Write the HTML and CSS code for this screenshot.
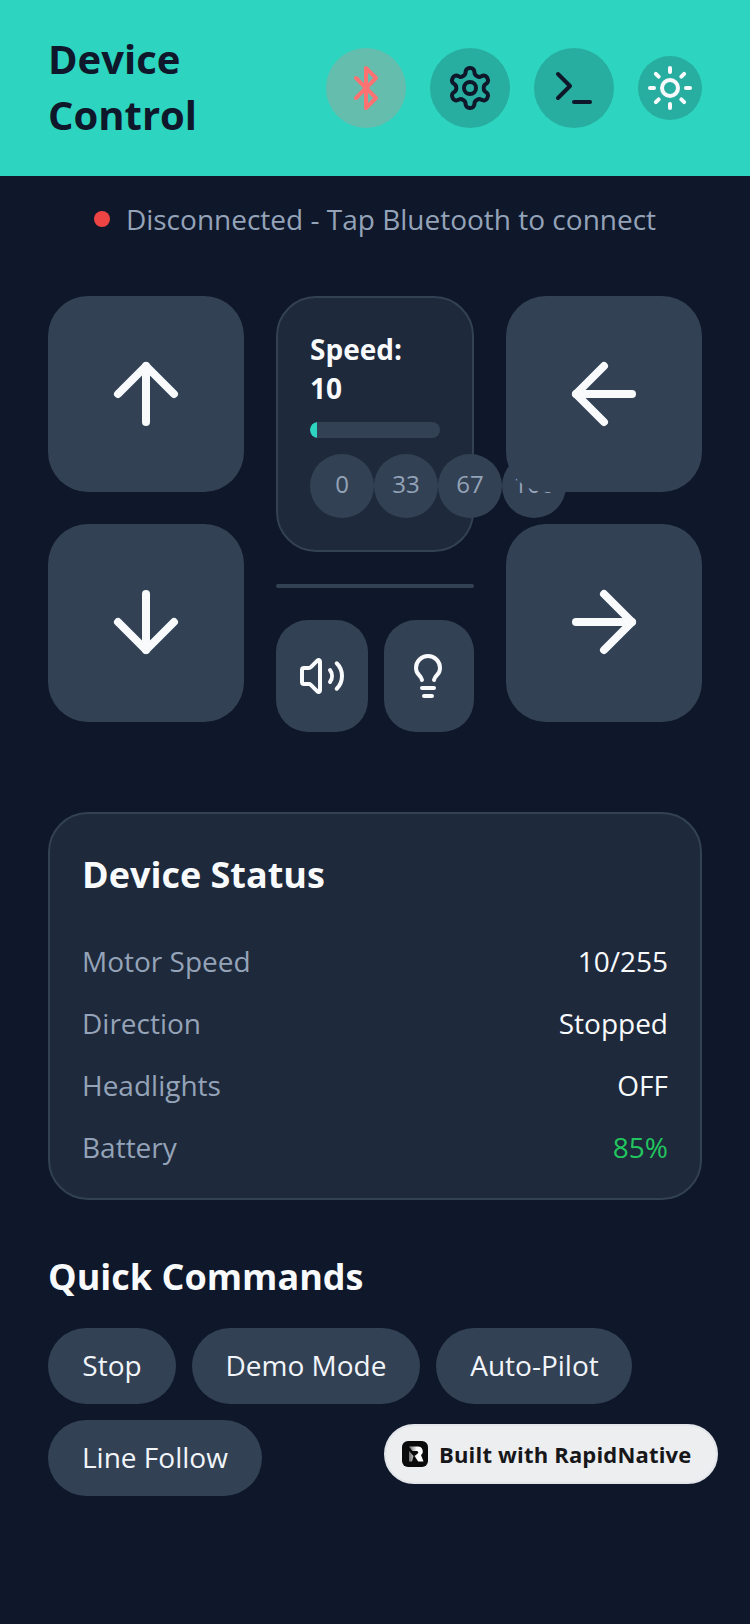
FILE: index.html
```html
<!DOCTYPE html>
<html lang="en">
<head>
<meta charset="utf-8">
<title>Device Control</title>
<link rel="stylesheet" href="styles.css">
</head>
<body>
<div class="app">
  <header class="header">
    <h1 class="title">Device Control</h1>
    <div class="header-actions">
      <button class="round round-bt">
        <svg class="ic-48" viewBox="0 0 24 24" fill="none" stroke="#fb7272" stroke-width="2" stroke-linecap="round" stroke-linejoin="round"><path d="m7 7 10 10-5 5V2l5 5L7 17"/></svg>
      </button>
      <button class="round">
        <svg class="ic-48" viewBox="0 0 24 24" fill="none" stroke="#0f172a" stroke-width="2" stroke-linecap="round" stroke-linejoin="round"><path d="M12.22 2h-.44a2 2 0 0 0-2 2v.18a2 2 0 0 1-1 1.73l-.43.25a2 2 0 0 1-2 0l-.15-.08a2 2 0 0 0-2.73.73l-.22.38a2 2 0 0 0 .73 2.73l.15.1a2 2 0 0 1 1 1.72v.51a2 2 0 0 1-1 1.74l-.15.09a2 2 0 0 0-.73 2.73l.22.38a2 2 0 0 0 2.73.73l.15-.08a2 2 0 0 1 2 0l.43.25a2 2 0 0 1 1 1.73V20a2 2 0 0 0 2 2h.44a2 2 0 0 0 2-2v-.18a2 2 0 0 1 1-1.73l.43-.25a2 2 0 0 1 2 0l.15.08a2 2 0 0 0 2.73-.73l.22-.39a2 2 0 0 0-.73-2.73l-.15-.08a2 2 0 0 1-1-1.74v-.5a2 2 0 0 1 1-1.74l.15-.09a2 2 0 0 0 .73-2.73l-.22-.38a2 2 0 0 0-2.73-.73l-.15.08a2 2 0 0 1-2 0l-.43-.25a2 2 0 0 1-1-1.73V4a2 2 0 0 0-2-2z"/><circle cx="12" cy="12" r="3"/></svg>
      </button>
      <button class="round">
        <svg class="ic-48" viewBox="0 0 24 24" fill="none" stroke="#0f172a" stroke-width="2" stroke-linecap="round" stroke-linejoin="round"><polyline points="4 17 10 11 4 5"/><line x1="12" x2="20" y1="19" y2="19"/></svg>
      </button>
      <button class="round round-sm">
        <svg class="ic-48" viewBox="0 0 24 24" fill="none" stroke="#f8fafc" stroke-width="2" stroke-linecap="round" stroke-linejoin="round"><circle cx="12" cy="12" r="4"/><path d="M12 2v2"/><path d="M12 20v2"/><path d="m4.93 4.93 1.41 1.41"/><path d="m17.66 17.66 1.41 1.41"/><path d="M2 12h2"/><path d="M20 12h2"/><path d="m6.34 17.66-1.41 1.41"/><path d="m19.07 4.93-1.41 1.41"/></svg>
      </button>
    </div>
  </header>

  <div class="status-line">
    <span class="dot"></span>
    <span class="status-text">Disconnected - Tap Bluetooth to connect</span>
  </div>

  <section class="pad">
    <div class="pad-col">
      <button class="dir dir-a">
        <svg class="ic-96" viewBox="0 0 24 24" fill="none" stroke="#f8fafc" stroke-width="2" stroke-linecap="round" stroke-linejoin="round"><path d="m5 12 7-7 7 7"/><path d="M12 19V5"/></svg>
      </button>
      <button class="dir dir-b">
        <svg class="ic-96" viewBox="0 0 24 24" fill="none" stroke="#f8fafc" stroke-width="2" stroke-linecap="round" stroke-linejoin="round"><path d="M12 5v14"/><path d="m19 12-7 7-7-7"/></svg>
      </button>
    </div>

    <div class="pad-mid">
      <div class="speed-card">
        <div class="speed-label">Speed: 10</div>
        <div class="speed-track"><div class="speed-fill" style="width:5%"></div></div>
        <div class="speed-presets">
          <button class="preset">0</button>
          <button class="preset">33</button>
          <button class="preset">67</button>
          <button class="preset">100</button>
        </div>
      </div>
      <div class="divider"></div>
      <div class="mini-row">
        <button class="mini mini-sound">
          <svg class="ic-48" viewBox="0 0 24 24" fill="none" stroke="#f8fafc" stroke-width="2" stroke-linecap="round" stroke-linejoin="round"><path d="M11 4.702a.705.705 0 0 0-1.203-.498L6.413 7.587A1.4 1.4 0 0 1 5.416 8H3a1 1 0 0 0-1 1v6a1 1 0 0 0 1 1h2.416a1.4 1.4 0 0 1 .997.413l3.383 3.384A.705.705 0 0 0 11 19.298z"/><path d="M16 9a5 5 0 0 1 0 6"/><path d="M19.364 18.364a9 9 0 0 0 0-12.728"/></svg>
        </button>
        <button class="mini mini-light">
          <svg class="ic-48" viewBox="0 0 24 24" fill="none" stroke="#f8fafc" stroke-width="2" stroke-linecap="round" stroke-linejoin="round"><path d="M15 14c.2-1 .7-1.700 1.500-2.500 1-.9 1.500-2.200 1.500-3.500A6 6 0 0 0 6 8c0 1 .2 2.200 1.500 3.500.7.7 1.300 1.500 1.500 2.500"/><path d="M9 18h6"/><path d="M10 22h4"/></svg>
        </button>
      </div>
    </div>

    <div class="pad-col pad-col-top">
      <button class="dir dir-a">
        <svg class="ic-96" viewBox="0 0 24 24" fill="none" stroke="#f8fafc" stroke-width="2" stroke-linecap="round" stroke-linejoin="round"><path d="m12 19-7-7 7-7"/><path d="M19 12H5"/></svg>
      </button>
      <button class="dir dir-b">
        <svg class="ic-96" viewBox="0 0 24 24" fill="none" stroke="#f8fafc" stroke-width="2" stroke-linecap="round" stroke-linejoin="round"><path d="M5 12h14"/><path d="m12 5 7 7-7 7"/></svg>
      </button>
    </div>
  </section>

  <section class="card">
    <h2 class="heading">Device Status</h2>
    <div class="rows">
      <div class="row"><span class="row-key">Motor Speed</span><span class="row-val">10/255</span></div>
      <div class="row"><span class="row-key">Direction</span><span class="row-val">Stopped</span></div>
      <div class="row"><span class="row-key">Headlights</span><span class="row-val">OFF</span></div>
      <div class="row"><span class="row-key">Battery</span><span class="row-val row-val-ok">85%</span></div>
    </div>
  </section>

  <section class="quick">
    <h2 class="heading quick-heading">Quick Commands</h2>
    <div class="chips">
      <button class="chip chip-stop">Stop</button>
      <button class="chip chip-demo">Demo Mode</button>
      <button class="chip chip-auto">Auto-Pilot</button>
      <button class="chip">Line Follow</button>
    </div>
  </section>

  <div class="badge">
    <svg class="badge-logo" viewBox="0 0 26 26"><defs><linearGradient id="logo-fade" x1="0" y1="0" x2="1" y2="0"><stop offset="0" stop-color="#6e6e6e"/><stop offset="0.55" stop-color="#ffffff"/></linearGradient></defs><rect width="26" height="26" rx="6" fill="#0b0b0c"/><path d="M7 5.500h9a4.800 4.800 0 0 1 3 8.500L21.500 20.500h-5.300L12.500 15l3-2.200a1.500 1.500 0 0 0-.8-2.800H10.500L7 5.500zM7 10l4.500 5-1.500 5.500H7z" fill="url(#logo-fade)"/></svg>
    <span class="badge-text">Built with RapidNative</span>
  </div>
</div>
</body>
</html>
```

FILE: styles.css
```css
* { box-sizing: border-box; }
html, body { margin: 0; padding: 0; }
body { background: #0f172a; font-family: "Open Sans", "Liberation Sans", sans-serif; }
button { font-family: inherit; border: 0; padding: 0; margin: 0; display: flex; align-items: center; justify-content: center; }
svg { display: block; flex: none; }
.app { position: relative; width: 750px; height: 1624px; overflow: hidden; background: #0f172a; }
.ic-48 { width: 48px; height: 48px; }
.ic-96 { width: 96px; height: 96px; }

.header { height: 176px; background: #2dd4bf; padding: 30px 48px 32px; display: flex; align-items: center; justify-content: space-between; }
.title { margin: 0; width: 200px; font-size: 40px; line-height: 56px; font-weight: 700; color: #0f172a; }
.header-actions { display: flex; align-items: center; gap: 24px; padding-top: 2px; }
.round { width: 80px; height: 80px; border-radius: 50%; background: rgba(15, 23, 42, 0.2); }
.round-bt { background: #65bdae; }
.round-sm { width: 64px; height: 64px; }

.status-line { height: 88px; padding-bottom: 2px; display: flex; align-items: center; justify-content: center; gap: 16px; }
.dot { width: 16px; height: 16px; border-radius: 50%; background: #ef4444; }
.status-text { font-size: 28px; line-height: 40px; color: #94a3b8; }

.pad { margin-top: 32px; padding: 0 48px; display: flex; justify-content: space-between; align-items: flex-start; }
.pad-col { width: 196px; display: flex; flex-direction: column; gap: 32px; }
.pad-col-top { position: relative; }
.dir { width: 196px; border-radius: 40px; background: #334155; }
.dir-a { height: 196px; }
.dir-b { height: 198px; padding-bottom: 2px; }

.pad-mid { width: 198px; }
.speed-card { height: 256px; border: 2px solid #334155; border-radius: 40px; background: #1e293b; padding: 32px; }
.speed-label { width: 120px; height: 76px; font-size: 28px; line-height: 38.6px; font-weight: 700; color: #f8fafc; }
.speed-track { margin-top: 16px; margin-bottom: 16px; width: 130px; height: 16px; border-radius: 8px; background: #334155; overflow: hidden; }
.speed-fill { height: 100%; background: #2dd4bf; border-radius: 8px 0 0 8px; }
.speed-presets { display: flex; width: 256px; }
.preset { flex: none; width: 64px; height: 64px; padding-bottom: 5px; border-radius: 50%; background: #334155; color: #94a3b8; font-size: 24px; }

.divider { height: 4px; margin-top: 32px; background: #334155; border-radius: 2px; }
.mini-row { margin-top: 32px; display: flex; gap: 16px; }
.mini { height: 112px; border-radius: 32px; background: #334155; }
.mini-sound { width: 92px; }
.mini-light { width: 90px; padding-right: 2px; }

.card { margin: 80px 48px 0; height: 388px; border: 2px solid #334155; border-radius: 40px; background: #1e293b; padding: 33px 32px 0; }
.heading { margin: 0; font-size: 36px; line-height: 56px; font-weight: 700; color: #f8fafc; }
.quick-heading { padding-top: 1px; height: 56px; }
.rows { margin-top: 35px; display: flex; flex-direction: column; gap: 16px; }
.row { height: 46px; display: flex; justify-content: space-between; align-items: center; font-size: 28px; }
.row-key { color: #94a3b8; }
.row-val { color: #f8fafc; }
.row-val-ok { color: #22c55e; }

.quick { margin-top: 48px; padding: 0 48px; }
.chips { margin-top: 24px; display: flex; flex-wrap: wrap; gap: 16px; }
.chip { height: 76px; padding: 0 34px 2px; border-radius: 38px; background: #334155; color: #f1f5f9; font-size: 28px; white-space: nowrap; }
.chip-stop { width: 128px; padding-left: 0; padding-right: 0; }
.chip-demo { width: 228px; padding-left: 0; padding-right: 0; }
.chip-auto { width: 196px; padding-left: 1px; padding-right: 0; }

.badge { position: absolute; left: 384px; top: 1424px; width: 334px; height: 60px; border-radius: 30px; background: #eceef0; border: 2px solid #e2e5e9; padding-left: 16px; display: flex; align-items: center; gap: 11px; }
.badge-logo { width: 26px; height: 26px; }
.badge-text { font-size: 22px; font-weight: 700; letter-spacing: 0.18px; color: #17171a; white-space: nowrap; }
```
